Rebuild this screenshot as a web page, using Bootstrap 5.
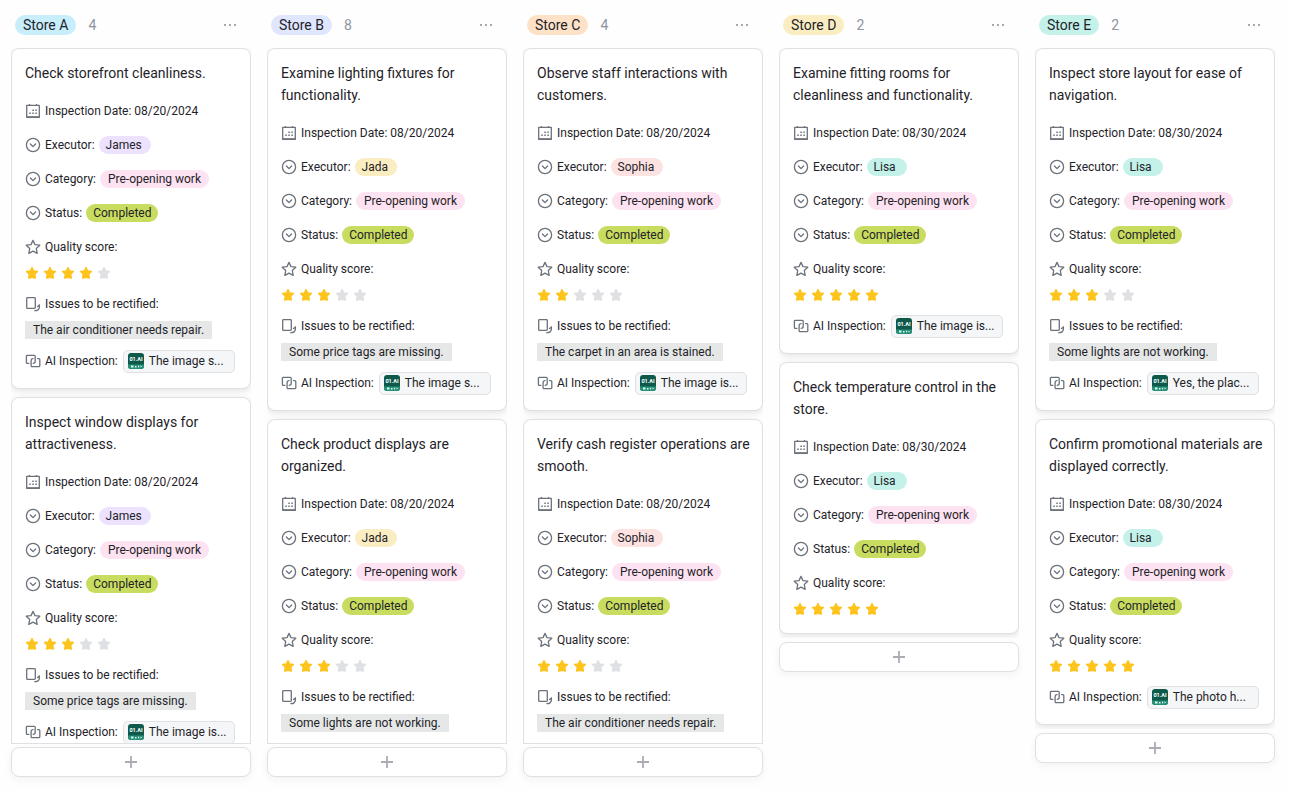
<!DOCTYPE html>
<html lang="en">
<head>
<meta charset="utf-8">
<meta name="viewport" content="width=device-width, initial-scale=1">
<title>Store inspections</title>
<link href="https://cdn.jsdelivr.net/npm/bootstrap@5.3.0/dist/css/bootstrap.min.css" rel="stylesheet">
<style>
  :root { --ink: #1f2329; --muted: #8f959e; --line: #dee0e3; --icon: #6c727a; }
  body { font-family: Roboto, "Liberation Sans", sans-serif; font-size: 12px; line-height: 18px; color: var(--ink); background: #fefefe; }
  .board { gap: 16px; padding: 0 15px 13px 11px; }
  .lane { flex: 1 1 0; min-width: 0; }
  .lane-head { height: 48px; padding: 2px 10px 0 4px; font-size: 14px; }
  .lane-name { font-size: 14px; font-weight: 400; line-height: 20px; padding: 0 8px; }
  .lane-count { color: var(--muted); }
  .lane-menu { width: 22px; height: 22px; color: var(--icon); }
  .lane-menu svg { width: 14px; height: 14px; }
  .lane-list { min-height: 0; padding-bottom: 4px; gap: 8px; }
  .lane-list.is-cut { border-bottom: 1px solid var(--line); padding-bottom: 0; }
  .lane-list.is-cut + .add-task { margin-top: 3px; }
  .task { flex: none; background: #fff; border: 1px solid var(--line); border-radius: 8px; box-shadow: 0 2px 6px rgba(31,35,41,.12); padding: 13px 11px 2px 13px; }
  .task-title { font-size: 14px; font-weight: 400; line-height: 22px; margin: 0 0 18px; }
  .field { margin-bottom: 16px; }
  .field-tall { margin-bottom: 13px; }
  .field-row { height: 18px; gap: 4px; white-space: nowrap; }
  .field-row > svg { width: 16px; height: 16px; flex: none; color: var(--icon); }
  .pill { line-height: 18px; padding: 0 8px; min-width: 40px; }
  .pill-person { padding: 0 9px 0 7px; }
  .pill-status { padding: 0 7px; }
  .stars { height: 18px; margin-top: 8px; gap: 4px; }
  .stars svg { width: 14px; height: 14px; color: #fcc41d; }
  .stars svg.off { color: #dee0e3; }
  .issue { display: table; background: #e6e8e7; padding: 0 8px; margin-top: 8px; }
  .ai-chip { width: 112px; height: 23px; padding: 0 4px; margin-left: 1px; gap: 5px; background: #f5f6f7; border: 1px solid var(--line); border-radius: 5px; color: var(--ink); text-decoration: none; }
  .ai-chip svg { width: 16px; height: 16px; flex: none; }
  .add-task { flex: none; height: 30px; margin-top: 4px; background: #fff; border: 1px solid var(--line); border-radius: 8px; box-shadow: 0 3px 8px rgba(31,35,41,.05); color: #a9adb1; }
  .add-task svg { width: 14px; height: 14px; }
  .c-sky { background: #c8eefb; } .c-blue { background: #dfe6fd; } .c-orange { background: #fee2c8; }
  .c-yellow { background: #faedc2; } .c-teal { background: #c4f2ea; } .c-violet { background: #ece2fe; }
  .c-red { background: #fde2e2; } .c-pink { background: #fde2f1; } .c-green { background: #c8dd5f; }
</style>
<script src="https://cdn.jsdelivr.net/npm/bootstrap@5.3.0/dist/js/bootstrap.bundle.min.js"></script>
</head>
<body>
<svg class="d-none" aria-hidden="true">
  <symbol id="i-date" viewBox="0 0 16 16"><path d="M1.700 2.400h12.600v11.900H1.700zM4.500 1v2M11.500 1v2" fill="none" stroke="currentColor" stroke-width="1.300" stroke-linejoin="round"/><path d="M1.500 14h13" stroke="currentColor" stroke-width="1.600"/><path d="M7.300 6.600h1.500v1.500H7.300zM10.300 6.600h1.500v1.500h-1.500zM4.300 9.600h1.500v1.500H4.300zM7.300 9.600h1.500v1.500H7.300zM10.300 9.600h1.500v1.500h-1.500z" fill="currentColor"/></symbol>
  <symbol id="i-select" viewBox="0 0 16 16"><g fill="none" stroke="currentColor" stroke-width="1.300" stroke-linecap="round" stroke-linejoin="round"><circle cx="8" cy="8" r="6.600"/><path d="M5.400 7 8 9.600 10.600 7"/></g></symbol>
  <symbol id="i-score" viewBox="0 0 16 16"><path d="m8 1.400 2 4.200 4.800.6-3.500 3.300.9 4.900L8 12.100l-4.200 2.300.9-4.900L1.200 6.200 6 5.600z" fill="none" stroke="currentColor" stroke-width="1.300" stroke-linejoin="round"/></symbol>
  <symbol id="i-star" viewBox="0 0 14 14"><path d="m7 1.700 1.600 3.300 3.800.5-2.700 2.600.6 3.900L7 11.200 3.700 12l.6-3.900L1.600 5.500 5.400 5z" fill="currentColor" stroke="currentColor" stroke-width="1.500" stroke-linejoin="round"/></symbol>
  <symbol id="i-lookup" viewBox="0 0 16 16"><g fill="none" stroke="currentColor" stroke-width="1.300" stroke-linecap="round" stroke-linejoin="round"><rect x="1.700" y="1.600" width="8.600" height="10.800" rx=".8"/><path d="M14.400 9v2c0 2.200-1.600 3.700-4.600 3.700M12.600 10.600l1.800-1.600"/></g></symbol>
  <symbol id="i-ai" viewBox="0 0 16 16"><g fill="none" stroke="currentColor" stroke-width="1.300" stroke-linejoin="round" stroke-linecap="round"><path d="M4 10.300H2.300a.9.900 0 0 1-.9-.9V3.200a.9.900 0 0 1 .9-.9h7a.9.900 0 0 1 .9.900v5c0 1.500-.6 2.100-2 2.100"/><path d="M12.600 5.600h1.300a.9.900 0 0 1 .9.900v6.200a.9.900 0 0 1-.9.900H7a.9.900 0 0 1-.9-.9V7.700c0-1.500.6-2.100 2-2.100"/></g></symbol>
  <symbol id="i-bot" viewBox="0 0 16 16"><rect width="16" height="16" rx="3" fill="#0f594b"/><path d="M0 11.500h16V13a3 3 0 0 1-3 3H3a3 3 0 0 1-3-3z" fill="#279078"/><text x="8" y="8" text-anchor="middle" font-size="5.500" font-weight="700" fill="#fff">01.AI</text><path d="M3 12.600h2.500v2H3zM7 13h1.500v1.500H7zM10 12.300l1.500 1.200-1.500 1.200M12.500 12.500l1.500 1-1.500 1" fill="#dff5ef"/></symbol>
  <symbol id="i-more" viewBox="0 0 14 14"><path d="M1.200 6.200h1.600v1.600H1.200zM6.200 6.200h1.600v1.600H6.200zM11.200 6.200h1.600v1.600h-1.600z" fill="currentColor"/></symbol>
  <symbol id="i-plus" viewBox="0 0 14 14"><path d="M7 1v12M1 7h12" stroke="currentColor" stroke-width="1.800"/></symbol>
</svg>

<main class="board d-flex vh-100 align-items-stretch" id="board"></main>

<script>
const people = { James: 'c-violet', Jada: 'c-yellow', Sophia: 'c-red', Lisa: 'c-teal' };
const stores = [
  { name: 'Store A', color: 'c-sky', count: 4, cut: true, tasks: [
    { title: 'Check storefront cleanliness.', date: '08/20/2024', who: 'James', score: 4, issue: 'The air conditioner needs repair.', ai: 'The image s...' },
    { title: 'Inspect window displays for attractiveness.', date: '08/20/2024', who: 'James', score: 3, issue: 'Some price tags are missing.', ai: 'The image is...' }] },
  { name: 'Store B', color: 'c-blue', count: 8, cut: true, tasks: [
    { title: 'Examine lighting fixtures for functionality.', date: '08/20/2024', who: 'Jada', score: 3, issue: 'Some price tags are missing.', ai: 'The image s...' },
    { title: 'Check product displays are organized.', date: '08/20/2024', who: 'Jada', score: 3, issue: 'Some lights are not working.' }] },
  { name: 'Store C', color: 'c-orange', count: 4, cut: true, tasks: [
    { title: 'Observe staff interactions with customers.', date: '08/20/2024', who: 'Sophia', score: 2, issue: 'The carpet in an area is stained.', ai: 'The image is...' },
    { title: 'Verify cash register operations are smooth.', date: '08/20/2024', who: 'Sophia', score: 3, issue: 'The air conditioner needs repair.' }] },
  { name: 'Store D', color: 'c-yellow', count: 2, tasks: [
    { title: 'Examine fitting rooms for cleanliness and functionality.', date: '08/30/2024', who: 'Lisa', score: 5, ai: 'The image is...' },
    { title: 'Check temperature control in the store.', date: '08/30/2024', who: 'Lisa', score: 5 }] },
  { name: 'Store E', color: 'c-teal', count: 2, tasks: [
    { title: 'Inspect store layout for ease of navigation.', date: '08/30/2024', who: 'Lisa', score: 3, issue: 'Some lights are not working.', ai: 'Yes, the plac...' },
    { title: 'Confirm promotional materials are displayed correctly.', date: '08/30/2024', who: 'Lisa', score: 5, ai: 'The photo h...' }] }
];

const icon = (id, cls = '') => `<svg class="${cls}" aria-hidden="true"><use href="#${id}"/></svg>`;
const field = (ic, label, value = '', below = '') => `
  <div class="field ${below ? 'field-tall' : ''}">
    <div class="field-row d-flex align-items-center">${icon(ic)}<span>${label}</span>${value}</div>${below}
  </div>`;
const pill = (text, color, extra = '') => `<span class="pill rounded-pill ${color} ${extra}">${text}</span>`;

const task = (t, lane, i, all) => `
  <article class="task ${lane.cut && i === all.length - 1 ? 'pb-3' : ''}">
    <h2 class="task-title">${t.title}</h2>
    ${field('i-date', 'Inspection Date: ' + t.date)}
    ${field('i-select', 'Executor:', pill(t.who, people[t.who], 'pill-person'))}
    ${field('i-select', 'Category:', pill('Pre-opening work', 'c-pink'))}
    ${field('i-select', 'Status:', pill('Completed', 'c-green', 'pill-status'))}
    ${field('i-score', 'Quality score:', '', `<div class="stars d-flex align-items-center" role="img" aria-label="${t.score} of 5">${[1, 2, 3, 4, 5].map(n => icon('i-star', n > t.score ? 'off' : '')).join('')}</div>`)}
    ${t.issue ? field('i-lookup', 'Issues to be rectified:', '', `<div class="issue">${t.issue}</div>`) : ''}
    ${t.ai ? field('i-ai', 'AI Inspection:', `<a href="#" class="ai-chip d-flex align-items-center">${icon('i-bot')}<span>${t.ai}</span></a>`) : ''}
  </article>`;

document.getElementById('board').innerHTML = stores.map(s => `
  <section class="lane d-flex flex-column">
    <header class="lane-head d-flex align-items-center flex-shrink-0">
      <h1 class="lane-name rounded-pill m-0 ${s.color}">${s.name}</h1>
      <span class="lane-count ms-2 ps-1">${s.count}</span>
      <button type="button" class="lane-menu btn p-0 border-0 ms-auto d-flex align-items-center justify-content-center" aria-label="${s.name} options">${icon('i-more')}</button>
    </header>
    <div class="lane-list d-flex flex-column overflow-hidden ${s.cut ? 'is-cut' : ''}">${s.tasks.map((t, i, all) => task(t, s, i, all)).join('')}</div>
    <button type="button" class="add-task d-flex align-items-center justify-content-center p-0" aria-label="Add to ${s.name}">${icon('i-plus')}</button>
  </section>`).join('');
</script>
</body>
</html>
